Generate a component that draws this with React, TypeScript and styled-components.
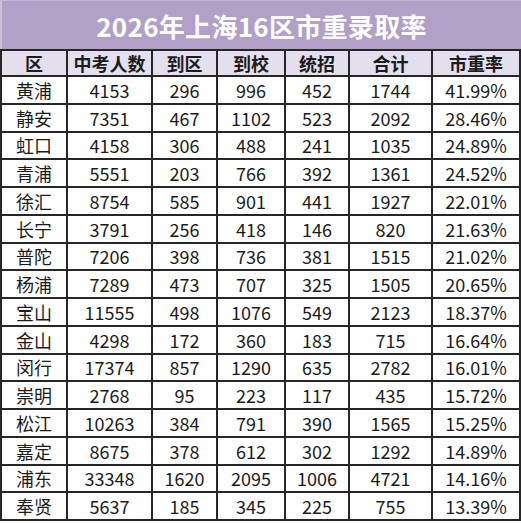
import React from "react";
import styled, { createGlobalStyle } from "styled-components";

const Global = createGlobalStyle`
  html, body { margin: 0; padding: 0; background: #ffffff; }
  body { font-family: "Noto Sans CJK SC", "Noto Sans", sans-serif; }
`;

const Page = styled.div`
  width: 521px;
  display: flex;
  flex-direction: column;
`;

const Title = styled.div`
  height: 49px;
  background: #b1a0c7;
  border-left: 2px solid #cbbfd9;
  border-top: 1px solid #c4b7d4;
  box-sizing: border-box;
  display: flex;
  align-items: center;
  justify-content: center;
  color: #ffffff;
  font-size: 26px;
  font-weight: 700;
  letter-spacing: 0.3px;
`;

const Grid = styled.div`
  display: grid;
  grid-template-columns: 64px 83px 63px 66px 62px 81px 86px;
  grid-template-rows: 24px repeat(16, 1fr);
  gap: 2px;
  padding: 2px;
  height: 472px;
  box-sizing: border-box;
  background: #262626;
`;

const Cell = styled.div<{ $head?: boolean }>`
  background: ${(p) => (p.$head ? "#e4dfec" : "#ffffff")};
  display: flex;
  align-items: center;
  justify-content: center;
  font-size: 18px;
  font-weight: ${(p) => (p.$head ? 700 : 400)};
  color: #1c1c1c;
  white-space: nowrap;
  overflow: hidden;
  line-height: 1;
`;

const headers = ["区", "中考人数", "到区", "到校", "统招", "合计", "市重率"];

const rows: (string | number)[][] = [
  ["黄浦", 4153, 296, 996, 452, 1744, "41.99%"],
  ["静安", 7351, 467, 1102, 523, 2092, "28.46%"],
  ["虹口", 4158, 306, 488, 241, 1035, "24.89%"],
  ["青浦", 5551, 203, 766, 392, 1361, "24.52%"],
  ["徐汇", 8754, 585, 901, 441, 1927, "22.01%"],
  ["长宁", 3791, 256, 418, 146, 820, "21.63%"],
  ["普陀", 7206, 398, 736, 381, 1515, "21.02%"],
  ["杨浦", 7289, 473, 707, 325, 1505, "20.65%"],
  ["宝山", 11555, 498, 1076, 549, 2123, "18.37%"],
  ["金山", 4298, 172, 360, 183, 715, "16.64%"],
  ["闵行", 17374, 857, 1290, 635, 2782, "16.01%"],
  ["崇明", 2768, 95, 223, 117, 435, "15.72%"],
  ["松江", 10263, 384, 791, 390, 1565, "15.25%"],
  ["嘉定", 8675, 378, 612, 302, 1292, "14.89%"],
  ["浦东", 33348, 1620, 2095, 1006, 4721, "14.16%"],
  ["奉贤", 5637, 185, 345, 225, 755, "13.39%"],
];

export default function App() {
  return (
    <>
      <Global />
      <Page>
        <Title>2026年上海16区市重录取率</Title>
        <Grid>
          {headers.map((h) => (
            <Cell key={h} $head>
              {h}
            </Cell>
          ))}
          {rows.map((r) =>
            r.map((v, i) => <Cell key={`${r[0]}-${i}`}>{v}</Cell>)
          )}
        </Grid>
      </Page>
    </>
  );
}
